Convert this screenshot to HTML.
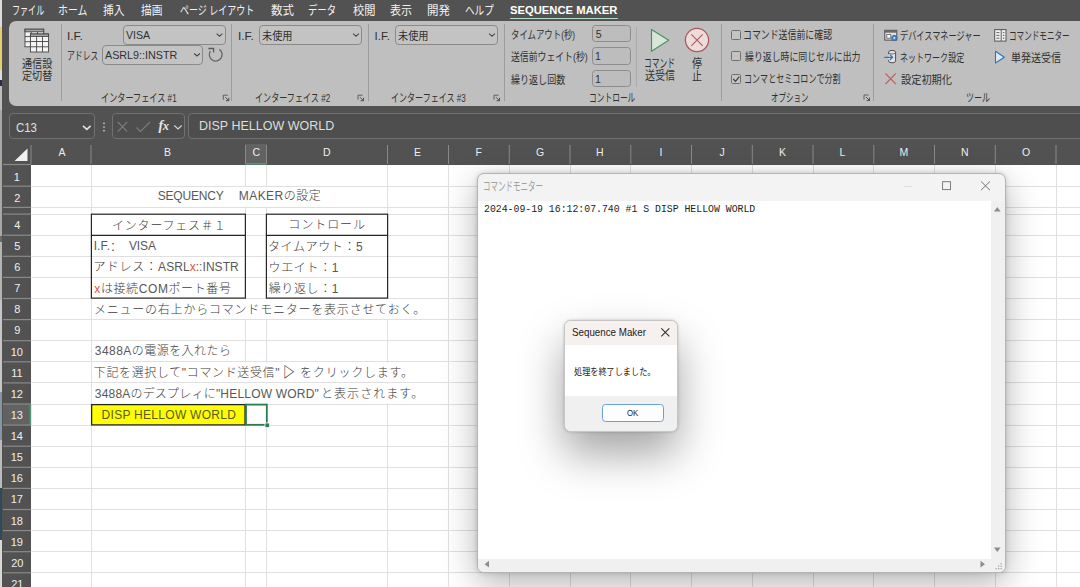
<!DOCTYPE html>
<html lang="ja"><head><meta charset="utf-8"><title>SEQUENCE MAKER</title>
<style>
*{box-sizing:border-box}
html,body{margin:0;padding:0}
body{width:1080px;height:587px;overflow:hidden;position:relative;background:#525252;
 font-family:"Liberation Sans","Noto Sans CJK JP",sans-serif}
.t{position:absolute;white-space:pre;line-height:1;transform-origin:0 50%;display:block}
.abs{position:absolute}
.layer{position:absolute;left:0;top:0;width:1080px;height:587px;overflow:hidden}
svg{position:absolute;left:0;top:0;overflow:visible}
.combo{position:absolute;border:1px solid #8a8a8a;border-radius:4px;background:#c3c3c3}
.inp{position:absolute;border:1px solid #8c8c8c;border-radius:3.5px;background:#bdbdbd}
.vsep{position:absolute;width:1px;background:#9c9c9c}
.cb{position:absolute;width:10px;height:10px;border:1px solid #707070;border-radius:1.5px;background:#c4c4c4}
</style></head>
<body>
<!-- sheet -->
<div class="layer"><svg width="1080" height="587" viewBox="0 0 1080 587" shape-rendering="crispEdges"><rect x="31" y="164.5" width="1049" height="423" fill="#ffffff"/><line x1="91" y1="164.5" x2="91" y2="587" stroke="#e0e0e0" stroke-width="1"/><line x1="245.5" y1="164.5" x2="245.5" y2="587" stroke="#e0e0e0" stroke-width="1"/><line x1="266.5" y1="164.5" x2="266.5" y2="587" stroke="#e0e0e0" stroke-width="1"/><line x1="387.5" y1="164.5" x2="387.5" y2="587" stroke="#e0e0e0" stroke-width="1"/><line x1="448.5" y1="164.5" x2="448.5" y2="587" stroke="#e0e0e0" stroke-width="1"/><line x1="509.3" y1="164.5" x2="509.3" y2="587" stroke="#e0e0e0" stroke-width="1"/><line x1="570" y1="164.5" x2="570" y2="587" stroke="#e0e0e0" stroke-width="1"/><line x1="630.8" y1="164.5" x2="630.8" y2="587" stroke="#e0e0e0" stroke-width="1"/><line x1="691.5" y1="164.5" x2="691.5" y2="587" stroke="#e0e0e0" stroke-width="1"/><line x1="752.3" y1="164.5" x2="752.3" y2="587" stroke="#e0e0e0" stroke-width="1"/><line x1="813" y1="164.5" x2="813" y2="587" stroke="#e0e0e0" stroke-width="1"/><line x1="873.8" y1="164.5" x2="873.8" y2="587" stroke="#e0e0e0" stroke-width="1"/><line x1="934.5" y1="164.5" x2="934.5" y2="587" stroke="#e0e0e0" stroke-width="1"/><line x1="995.3" y1="164.5" x2="995.3" y2="587" stroke="#e0e0e0" stroke-width="1"/><line x1="1056" y1="164.5" x2="1056" y2="587" stroke="#e0e0e0" stroke-width="1"/><line x1="1117" y1="164.5" x2="1117" y2="587" stroke="#e0e0e0" stroke-width="1"/><line x1="31" y1="186.2" x2="1080" y2="186.2" stroke="#e0e0e0" stroke-width="1"/><line x1="31" y1="207.4" x2="1080" y2="207.4" stroke="#e0e0e0" stroke-width="1"/><line x1="31" y1="214.1" x2="1080" y2="214.1" stroke="#e0e0e0" stroke-width="1"/><line x1="31" y1="235.2" x2="1080" y2="235.2" stroke="#e0e0e0" stroke-width="1"/><line x1="31" y1="256.3" x2="1080" y2="256.3" stroke="#e0e0e0" stroke-width="1"/><line x1="31" y1="277.4" x2="1080" y2="277.4" stroke="#e0e0e0" stroke-width="1"/><line x1="31" y1="298.5" x2="1080" y2="298.5" stroke="#e0e0e0" stroke-width="1"/><line x1="31" y1="319.6" x2="1080" y2="319.6" stroke="#e0e0e0" stroke-width="1"/><line x1="31" y1="340.7" x2="1080" y2="340.7" stroke="#e0e0e0" stroke-width="1"/><line x1="31" y1="361.8" x2="1080" y2="361.8" stroke="#e0e0e0" stroke-width="1"/><line x1="31" y1="382.9" x2="1080" y2="382.9" stroke="#e0e0e0" stroke-width="1"/><line x1="31" y1="404.0" x2="1080" y2="404.0" stroke="#e0e0e0" stroke-width="1"/><line x1="31" y1="425.1" x2="1080" y2="425.1" stroke="#e0e0e0" stroke-width="1"/><line x1="31" y1="446.2" x2="1080" y2="446.2" stroke="#e0e0e0" stroke-width="1"/><line x1="31" y1="467.3" x2="1080" y2="467.3" stroke="#e0e0e0" stroke-width="1"/><line x1="31" y1="488.4" x2="1080" y2="488.4" stroke="#e0e0e0" stroke-width="1"/><line x1="31" y1="509.5" x2="1080" y2="509.5" stroke="#e0e0e0" stroke-width="1"/><line x1="31" y1="530.6" x2="1080" y2="530.6" stroke="#e0e0e0" stroke-width="1"/><line x1="31" y1="551.7" x2="1080" y2="551.7" stroke="#e0e0e0" stroke-width="1"/><line x1="31" y1="572.8" x2="1080" y2="572.8" stroke="#e0e0e0" stroke-width="1"/><line x1="31" y1="593.9" x2="1080" y2="593.9" stroke="#e0e0e0" stroke-width="1"/></svg><svg width="1080" height="587" viewBox="0 0 1080 587"><rect x="244.5" y="187.0" width="2" height="19.6" fill="#fff"/><rect x="265.5" y="187.0" width="2" height="19.6" fill="#fff"/><rect x="244.5" y="299.3" width="2" height="19.5" fill="#fff"/><rect x="265.5" y="299.3" width="2" height="19.5" fill="#fff"/><rect x="386.5" y="299.3" width="2" height="19.5" fill="#fff"/><rect x="244.5" y="362.6" width="2" height="19.5" fill="#fff"/><rect x="265.5" y="362.6" width="2" height="19.5" fill="#fff"/><rect x="386.5" y="362.6" width="2" height="19.5" fill="#fff"/><rect x="244.5" y="383.7" width="2" height="19.5" fill="#fff"/><rect x="265.5" y="383.7" width="2" height="19.5" fill="#fff"/><rect x="386.5" y="383.7" width="2" height="19.5" fill="#fff"/><rect x="91.4" y="214.2" width="154" height="83.9" fill="none" stroke="#262626" stroke-width="1.2"/><line x1="91.5" y1="235.4" x2="245.4" y2="235.4" stroke="#262626" stroke-width="1.2"/><rect x="266.4" y="214.2" width="121.2" height="83.9" fill="none" stroke="#262626" stroke-width="1.2"/><line x1="266.4" y1="235.4" x2="387.6" y2="235.4" stroke="#262626" stroke-width="1.2"/><rect x="91.6" y="404.6" width="153.4" height="20.3" fill="#ffff00" stroke="#262626" stroke-width="1.3"/><rect x="246" y="404.6" width="20.8" height="20.2" fill="#ffffff" stroke="#2c7a4e" stroke-width="1.8"/><rect x="265" y="423" width="4.6" height="4.6" fill="#2c7a4e" stroke="#ffffff" stroke-width="0.8"/></svg><span class="t" style='left:157.70px;top:189.80px;font-size:12px;color:#3c3c3c;font-weight:300;letter-spacing:-0.2px;'><span style="color:#585858">SEQUENCY</span></span><span class="t" style='left:238.70px;top:189.80px;font-size:12px;color:#3c3c3c;font-weight:300;letter-spacing:0.471px;'><span style="color:#585858">MAKER</span>の設定</span><span class="t" style='left:112.00px;top:219.70px;font-size:12px;color:#3c3c3c;font-weight:300;letter-spacing:0.8px;'>インターフェス＃１</span><span class="t" style='left:93.70px;top:240.40px;font-size:12px;color:#3c3c3c;font-weight:300;letter-spacing:0.1px;'><span style="color:#585858">I.F.</span></span><span class="t" style='left:107.00px;top:241.50px;font-size:12px;color:#3c3c3c;font-weight:300;letter-spacing:0.2px;'>：</span><span class="t" style='left:128.90px;top:240.40px;font-size:12px;color:#3c3c3c;font-weight:300;letter-spacing:-0.1px;'><span style="color:#585858">VISA</span></span><span class="t" style='left:93.50px;top:261.30px;font-size:12px;color:#3c3c3c;font-weight:300;letter-spacing:0.95px;'>アドレス：</span><span class="t" style='left:158.10px;top:261.30px;font-size:12px;color:#3c3c3c;font-weight:300;letter-spacing:0.055px;'><span style="color:#585858">ASRL</span><span style="color:#e4503e">x</span><span style="color:#585858">::INSTR</span></span><span class="t" style='left:94.30px;top:283.00px;font-size:12px;color:#3c3c3c;font-weight:300;letter-spacing:0.6px;'><span style="color:#e4503e">x</span>は接続<span style="color:#585858">COM</span>ポート番号</span><span class="t" style='left:288.60px;top:218.90px;font-size:12px;color:#3c3c3c;font-weight:300;letter-spacing:0.88px;'>コントロール</span><span class="t" style='left:268.00px;top:240.70px;font-size:12px;color:#3c3c3c;font-weight:300;letter-spacing:0.614px;'>タイムアウト：<span style="color:#585858">5</span></span><span class="t" style='left:268.50px;top:261.50px;font-size:12px;color:#3c3c3c;font-weight:300;letter-spacing:0.66px;'>ウエイト：<span style="color:#585858">1</span></span><span class="t" style='left:268.70px;top:282.70px;font-size:12px;color:#3c3c3c;font-weight:300;letter-spacing:0.62px;'>繰り返し：<span style="color:#585858">1</span></span><span class="t" style='left:93.90px;top:303.80px;font-size:12px;color:#3c3c3c;font-weight:300;letter-spacing:0.788px;'>メニューの右上からコマンドモニターを表示させておく。</span><span class="t" style='left:94.75px;top:345.30px;font-size:12px;color:#3c3c3c;font-weight:300;letter-spacing:0.463px;'><span style="color:#585858">3488A</span>の電源を入れたら</span><span class="t" style='left:93.75px;top:367.30px;font-size:12px;color:#3c3c3c;font-weight:300;letter-spacing:0.637px;'>下記を選択して<span style="color:#585858">"</span>コマンド送受信<span style="color:#585858">"</span></span><span class="t" style='left:283.37px;top:364.90px;font-size:14.5px;color:#303030;font-weight:700;transform:scaleX(0.8167);'>▷</span><span class="t" style='left:300.10px;top:367.30px;font-size:12px;color:#3c3c3c;font-weight:300;letter-spacing:0.775px;'>をクリックします。</span><span class="t" style='left:94.75px;top:388.40px;font-size:12px;color:#3c3c3c;font-weight:300;letter-spacing:0.202px;'><span style="color:#585858">3488A</span>のデスプレィに<span style="color:#585858">"HELLOW WORD"</span></span><span class="t" style='left:321.00px;top:388.40px;font-size:12px;color:#3c3c3c;font-weight:300;letter-spacing:1.057px;'>と表示されます。</span><span class="t" style='left:101.60px;top:408.90px;font-size:12px;color:#55552a;font-weight:300;letter-spacing:0.281px;'><span style="color:#5a5a2c">DISP HELLOW WORLD</span></span><svg width="1080" height="587" viewBox="0 0 1080 587"><rect x="3" y="142" width="1077" height="22.5" fill="#525252"/><rect x="245.5" y="144" width="21" height="20.5" fill="#626262"/><rect x="245.5" y="163" width="21" height="1.6" fill="#4f9a6f"/><line x1="31" y1="145" x2="31" y2="164" stroke="#8a8a8a" stroke-width="1"/><line x1="91" y1="145" x2="91" y2="164" stroke="#8a8a8a" stroke-width="1"/><line x1="245.5" y1="145" x2="245.5" y2="164" stroke="#8a8a8a" stroke-width="1"/><line x1="266.5" y1="145" x2="266.5" y2="164" stroke="#8a8a8a" stroke-width="1"/><line x1="387.5" y1="145" x2="387.5" y2="164" stroke="#8a8a8a" stroke-width="1"/><line x1="448.5" y1="145" x2="448.5" y2="164" stroke="#8a8a8a" stroke-width="1"/><line x1="509.3" y1="145" x2="509.3" y2="164" stroke="#8a8a8a" stroke-width="1"/><line x1="570" y1="145" x2="570" y2="164" stroke="#8a8a8a" stroke-width="1"/><line x1="630.8" y1="145" x2="630.8" y2="164" stroke="#8a8a8a" stroke-width="1"/><line x1="691.5" y1="145" x2="691.5" y2="164" stroke="#8a8a8a" stroke-width="1"/><line x1="752.3" y1="145" x2="752.3" y2="164" stroke="#8a8a8a" stroke-width="1"/><line x1="813" y1="145" x2="813" y2="164" stroke="#8a8a8a" stroke-width="1"/><line x1="873.8" y1="145" x2="873.8" y2="164" stroke="#8a8a8a" stroke-width="1"/><line x1="934.5" y1="145" x2="934.5" y2="164" stroke="#8a8a8a" stroke-width="1"/><line x1="995.3" y1="145" x2="995.3" y2="164" stroke="#8a8a8a" stroke-width="1"/><line x1="1056" y1="145" x2="1056" y2="164" stroke="#8a8a8a" stroke-width="1"/><rect x="3" y="164.5" width="28" height="423" fill="#525252"/><rect x="3" y="404.0" width="28" height="21.100000000000023" fill="#626262"/><rect x="29.6" y="404.0" width="1.6" height="21.100000000000023" fill="#4f9a6f"/><line x1="3" y1="164.5" x2="31" y2="164.5" stroke="#8a8a8a" stroke-width="1.2"/><line x1="3" y1="186.2" x2="31" y2="186.2" stroke="#8a8a8a" stroke-width="1.2"/><line x1="3" y1="207.4" x2="31" y2="207.4" stroke="#8a8a8a" stroke-width="1.2"/><line x1="3" y1="214.1" x2="31" y2="214.1" stroke="#8a8a8a" stroke-width="1.2"/><line x1="3" y1="235.2" x2="31" y2="235.2" stroke="#8a8a8a" stroke-width="1.2"/><line x1="3" y1="256.3" x2="31" y2="256.3" stroke="#8a8a8a" stroke-width="1.2"/><line x1="3" y1="277.4" x2="31" y2="277.4" stroke="#8a8a8a" stroke-width="1.2"/><line x1="3" y1="298.5" x2="31" y2="298.5" stroke="#8a8a8a" stroke-width="1.2"/><line x1="3" y1="319.6" x2="31" y2="319.6" stroke="#8a8a8a" stroke-width="1.2"/><line x1="3" y1="340.7" x2="31" y2="340.7" stroke="#8a8a8a" stroke-width="1.2"/><line x1="3" y1="361.8" x2="31" y2="361.8" stroke="#8a8a8a" stroke-width="1.2"/><line x1="3" y1="382.9" x2="31" y2="382.9" stroke="#8a8a8a" stroke-width="1.2"/><line x1="3" y1="404.0" x2="31" y2="404.0" stroke="#8a8a8a" stroke-width="1.2"/><line x1="3" y1="425.1" x2="31" y2="425.1" stroke="#8a8a8a" stroke-width="1.2"/><line x1="3" y1="446.2" x2="31" y2="446.2" stroke="#8a8a8a" stroke-width="1.2"/><line x1="3" y1="467.3" x2="31" y2="467.3" stroke="#8a8a8a" stroke-width="1.2"/><line x1="3" y1="488.4" x2="31" y2="488.4" stroke="#8a8a8a" stroke-width="1.2"/><line x1="3" y1="509.5" x2="31" y2="509.5" stroke="#8a8a8a" stroke-width="1.2"/><line x1="3" y1="530.6" x2="31" y2="530.6" stroke="#8a8a8a" stroke-width="1.2"/><line x1="3" y1="551.7" x2="31" y2="551.7" stroke="#8a8a8a" stroke-width="1.2"/><line x1="3" y1="572.8" x2="31" y2="572.8" stroke="#8a8a8a" stroke-width="1.2"/><line x1="3" y1="593.9" x2="31" y2="593.9" stroke="#8a8a8a" stroke-width="1.2"/><path d="M27.5 148.5 L27.5 161 L14.5 161 Z" fill="#f0f0f0"/></svg><span class="t" style='left:58.50px;top:146.90px;font-size:10.5px;color:#eeeeee;'>A</span><span class="t" style='left:164.00px;top:146.90px;font-size:10.5px;color:#eeeeee;'>B</span><span class="t" style='left:252.50px;top:146.90px;font-size:10.5px;color:#eeeeee;'>C</span><span class="t" style='left:323.00px;top:146.90px;font-size:10.5px;color:#eeeeee;'>D</span><span class="t" style='left:414.00px;top:146.90px;font-size:10.5px;color:#eeeeee;'>E</span><span class="t" style='left:475.50px;top:146.90px;font-size:10.5px;color:#eeeeee;'>F</span><span class="t" style='left:536.00px;top:146.90px;font-size:10.5px;color:#eeeeee;'>G</span><span class="t" style='left:596.00px;top:146.90px;font-size:10.5px;color:#eeeeee;'>H</span><span class="t" style='left:659.50px;top:146.90px;font-size:10.5px;color:#eeeeee;'>I</span><span class="t" style='left:719.50px;top:146.90px;font-size:10.5px;color:#eeeeee;'>J</span><span class="t" style='left:779.00px;top:146.90px;font-size:10.5px;color:#eeeeee;'>K</span><span class="t" style='left:839.50px;top:146.90px;font-size:10.5px;color:#eeeeee;'>L</span><span class="t" style='left:899.50px;top:146.90px;font-size:10.5px;color:#eeeeee;'>M</span><span class="t" style='left:961.00px;top:146.90px;font-size:10.5px;color:#eeeeee;'>N</span><span class="t" style='left:1022.00px;top:146.90px;font-size:10.5px;color:#eeeeee;'>O</span><span class="t" style='left:13.70px;top:171.60px;font-size:11px;color:#eeeeee;'>1</span><span class="t" style='left:14.20px;top:192.60px;font-size:11px;color:#eeeeee;'>2</span><span class="t" style='left:14.20px;top:220.10px;font-size:11px;color:#eeeeee;'>4</span><span class="t" style='left:14.20px;top:241.10px;font-size:11px;color:#eeeeee;'>5</span><span class="t" style='left:14.20px;top:262.10px;font-size:11px;color:#eeeeee;'>6</span><span class="t" style='left:14.20px;top:283.10px;font-size:11px;color:#eeeeee;'>7</span><span class="t" style='left:14.20px;top:304.10px;font-size:11px;color:#eeeeee;'>8</span><span class="t" style='left:14.20px;top:325.10px;font-size:11px;color:#eeeeee;'>9</span><span class="t" style='left:10.70px;top:346.60px;font-size:11px;color:#eeeeee;'>10</span><span class="t" style='left:11.20px;top:367.60px;font-size:11px;color:#eeeeee;'>11</span><span class="t" style='left:10.70px;top:388.60px;font-size:11px;color:#eeeeee;'>12</span><span class="t" style='left:10.70px;top:409.60px;font-size:11px;color:#eeeeee;'>13</span><span class="t" style='left:10.70px;top:431.10px;font-size:11px;color:#eeeeee;'>14</span><span class="t" style='left:10.70px;top:452.10px;font-size:11px;color:#eeeeee;'>15</span><span class="t" style='left:10.70px;top:473.10px;font-size:11px;color:#eeeeee;'>16</span><span class="t" style='left:10.70px;top:494.10px;font-size:11px;color:#eeeeee;'>17</span><span class="t" style='left:10.70px;top:515.60px;font-size:11px;color:#eeeeee;'>18</span><span class="t" style='left:10.70px;top:536.60px;font-size:11px;color:#eeeeee;'>19</span><span class="t" style='left:11.20px;top:557.60px;font-size:11px;color:#eeeeee;'>20</span><span class="t" style='left:11.20px;top:578.60px;font-size:11px;color:#eeeeee;'>21</span></div>
<!-- tabs + ribbon -->
<div class="layer" style="height:142px"><div class="abs" style="left:0;top:0;width:1080px;height:142px;background:#525252"></div><span class="t" style='left:11.83px;top:4.50px;font-size:12px;color:#f2f2f2;transform:scaleX(0.6702);'>ファイル</span><span class="t" style='left:58.18px;top:4.50px;font-size:12px;color:#f2f2f2;transform:scaleX(0.8235);'>ホーム</span><span class="t" style='left:103.00px;top:5.00px;font-size:12px;color:#f2f2f2;transform:scaleX(0.8958);'>挿入</span><span class="t" style='left:141.00px;top:5.00px;font-size:12px;color:#f2f2f2;transform:scaleX(0.8958);'>描画</span><span class="t" style='left:179.75px;top:5.00px;font-size:12px;color:#f2f2f2;transform:scaleX(0.7500);'>ページ レイアウト</span><span class="t" style='left:271.00px;top:5.00px;font-size:12px;color:#f2f2f2;transform:scaleX(0.9583);'>数式</span><span class="t" style='left:308.22px;top:5.00px;font-size:12px;color:#f2f2f2;transform:scaleX(0.7794);'>データ</span><span class="t" style='left:352.50px;top:5.00px;font-size:12px;color:#f2f2f2;transform:scaleX(0.9348);'>校閲</span><span class="t" style='left:390.00px;top:5.00px;font-size:12px;color:#f2f2f2;transform:scaleX(0.9167);'>表示</span><span class="t" style='left:427.04px;top:5.00px;font-size:12px;color:#f2f2f2;transform:scaleX(0.9565);'>開発</span><span class="t" style='left:465.20px;top:5.00px;font-size:12px;color:#f2f2f2;transform:scaleX(0.8000);'>ヘルプ</span><span class="t" style='left:510.00px;top:4.60px;font-size:11.3px;color:#ffffff;font-weight:700;transform:scaleX(0.9954);'>SEQUENCE MAKER</span><div class="abs" style="left:509.5px;top:17.6px;width:108px;height:1.8px;background:#b5dcc6;border-radius:1px"></div><div class="abs" style="left:9px;top:21px;width:1090px;height:85.2px;background:#bfbfbf;border-radius:7px"></div><div class="vsep" style="left:61px;top:24px;height:77px"></div><div class="vsep" style="left:231px;top:24px;height:77px"></div><div class="vsep" style="left:368px;top:24px;height:77px"></div><div class="vsep" style="left:504px;top:24px;height:77px"></div><div class="vsep" style="left:721px;top:24px;height:77px"></div><div class="vsep" style="left:873px;top:24px;height:77px"></div><div class="vsep" style="left:636px;top:27px;height:60px;background:#ababab"></div><div class="combo" style="left:122.5px;top:24.6px;width:103.30000000000001px;height:20.0px"></div><div class="combo" style="left:102px;top:45px;width:100.80000000000001px;height:19.5px"></div><div class="combo" style="left:259px;top:24.6px;width:102.60000000000002px;height:20.0px"></div><div class="combo" style="left:394.5px;top:24.6px;width:103.10000000000002px;height:20.0px"></div><div class="inp" style="left:592.2px;top:25.2px;width:38.8px;height:17.2px"></div><div class="inp" style="left:592.2px;top:47.4px;width:38.8px;height:17.2px"></div><div class="inp" style="left:592.2px;top:69.8px;width:38.8px;height:17.0px"></div><div class="cb" style="left:731px;top:29.9px"></div><div class="cb" style="left:731px;top:51.3px"></div><div class="cb" style="left:731px;top:73.9px"></div><svg width="1080" height="587" viewBox="0 0 1080 587" fill="none"><path d="M216.6 33.7 L219.5 36.2 L222.4 33.7" stroke="#484848" stroke-width="1.1"/><path d="M194.1 53.5 L197 56.0 L199.9 53.5" stroke="#484848" stroke-width="1.1"/><path d="M353.1 33.7 L356 36.2 L358.9 33.7" stroke="#484848" stroke-width="1.1"/><path d="M489.1 33.7 L492 36.2 L494.9 33.7" stroke="#484848" stroke-width="1.1"/><path d="M223.3 99.7 V95.2 H227.8" stroke="#555" stroke-width="0.9"/><path d="M225.3 97.2 L228.60000000000002 100.5 M228.8 97.8 V100.7 H225.9" stroke="#444" stroke-width="0.9"/><path d="M358 99.7 V95.2 H362.5" stroke="#555" stroke-width="0.9"/><path d="M360 97.2 L363.3 100.5 M363.5 97.8 V100.7 H360.6" stroke="#444" stroke-width="0.9"/><path d="M494 99.7 V95.2 H498.5" stroke="#555" stroke-width="0.9"/><path d="M496 97.2 L499.3 100.5 M499.5 97.8 V100.7 H496.6" stroke="#444" stroke-width="0.9"/><path d="M864 99.5 V95 H868.5" stroke="#555" stroke-width="0.9"/><path d="M866 97 L869.3 100.3 M869.5 97.6 V100.5 H866.6" stroke="#444" stroke-width="0.9"/><g stroke="#454545" stroke-width="0.9"><rect x="25" y="29.2" width="18.7" height="17.6" fill="#f2f2f2"/><rect x="25" y="29.2" width="18.7" height="2.6" fill="#a5a5a5"/><line x1="31.2" y1="31.8" x2="31.2" y2="46.8"/><line x1="37.5" y1="31.8" x2="37.5" y2="46.8"/><line x1="25" y1="36.6" x2="43.7" y2="36.6"/><line x1="25" y1="41.7" x2="43.7" y2="41.7"/><rect x="30.4" y="34" width="18.2" height="18" fill="#f4f4f4"/><rect x="30.4" y="34" width="18.2" height="2.4" fill="#a5a5a5"/><line x1="36.6" y1="36.4" x2="36.6" y2="52"/><line x1="42.5" y1="36.4" x2="42.5" y2="52"/><line x1="30.4" y1="41.5" x2="48.6" y2="41.5"/><line x1="30.4" y1="46.8" x2="48.6" y2="46.8"/></g><path d="M219.4 49.4 A6.4 6.4 0 1 1 210.3 51.2" stroke="#666" stroke-width="1.3"/><path d="M208.4 48.5 H213.6 V52.4" stroke="#5a5a5a" stroke-width="1.3"/><path d="M651.5 29.4 L668.7 40.3 L651.5 51.3 Z" fill="#d8e5d9" stroke="#4f9160" stroke-width="1.2" stroke-linejoin="round"/><circle cx="697" cy="40.1" r="11.6" fill="#ecdcdc" stroke="#a85858" stroke-width="1.25"/><path d="M691.3 34.4 L702.7 45.8 M702.7 34.4 L691.3 45.8" stroke="#b85c5c" stroke-width="1.2"/><path d="M733.3 79 L735.5 81.3 L739.3 76.6" stroke="#3a3a3a" stroke-width="1.1"/><rect x="884.8" y="30.3" width="12" height="9.8" fill="#e4e4e4" stroke="#4a4a4a" stroke-width="1"/><rect x="884.8" y="30.3" width="12" height="2.4" fill="#6a6a6a"/><rect x="886.8" y="34.6" width="4" height="3.6" fill="#fff" stroke="#555" stroke-width="0.8"/><circle cx="894.3" cy="38" r="2.7" fill="#4a86c5" stroke="#2d68a8" stroke-width="0.8"/><circle cx="894.3" cy="38" r="0.9" fill="#dfeaf5"/><path d="M888.6 54.2 V52.2 Q888.6 50.4 892.1 50.4 Q895.6 50.4 895.6 52.2 V61 Q895.6 62.8 892.1 62.8 Q888.6 62.8 888.6 61 V60" stroke="#505050" stroke-width="1" fill="#e2e2e2"/><path d="M888.6 52.4 Q888.6 54 892.1 54 Q895.6 54 895.6 52.4" stroke="#505050" stroke-width="0.8"/><path d="M884.3 57.3 H892.3 M889.8 54.6 L892.6 57.3 L889.8 60" stroke="#2f74b5" stroke-width="1.2"/><path d="M885.5 73.5 L895.8 84 M895.8 73.5 L885.5 84" stroke="#c2645f" stroke-width="1.15"/><rect x="994.7" y="29.6" width="11.3" height="11.5" fill="#efefef" stroke="#555" stroke-width="1"/><path d="M1001.2 29.6 V41.1 M996.4 32.6 H999.4 M996.4 35.4 H999.4 M996.4 38.2 H999.4 M1002.8 32.6 H1004.4 M1002.8 35.4 H1004.4 M1002.8 38.2 H1004.4" stroke="#555" stroke-width="0.9"/><path d="M995.5 51.3 L1004.3 57.2 L995.5 63 Z" fill="#dfe9f4" stroke="#3474b0" stroke-width="1.1" stroke-linejoin="round"/></svg><span class="t" style='left:22.30px;top:58.80px;font-size:11.5px;color:#303030;transform:scaleX(0.8794);'>通信設</span><span class="t" style='left:22.30px;top:70.70px;font-size:11.5px;color:#303030;transform:scaleX(0.8794);'>定切替</span><span class="t" style='left:66.96px;top:30.50px;font-size:11.5px;color:#303030;transform:scaleX(1.0357);'>I.F.</span><span class="t" style='left:126.00px;top:30.00px;font-size:11.5px;color:#303030;transform:scaleX(0.9231);'>VISA</span><span class="t" style='left:67.32px;top:50.50px;font-size:11.5px;color:#303030;transform:scaleX(0.6818);'>アドレス</span><span class="t" style='left:105.00px;top:49.50px;font-size:11.5px;color:#303030;transform:scaleX(0.9351);'>ASRL9::INSTR</span><span class="t" style='left:101.29px;top:93.00px;font-size:11.5px;color:#303030;transform:scaleX(0.7075);'>インターフェイス #1</span><span class="t" style='left:238.46px;top:30.50px;font-size:11.5px;color:#303030;transform:scaleX(1.0357);'>I.F.</span><span class="t" style='left:262.00px;top:30.50px;font-size:11.5px;color:#303030;transform:scaleX(0.8824);'>未使用</span><span class="t" style='left:255.30px;top:93.00px;font-size:11.5px;color:#303030;transform:scaleX(0.7028);'>インターフェイス #2</span><span class="t" style='left:374.50px;top:30.50px;font-size:11.5px;color:#303030;'>I.F.</span><span class="t" style='left:397.50px;top:30.50px;font-size:11.5px;color:#303030;transform:scaleX(0.8824);'>未使用</span><span class="t" style='left:391.30px;top:93.00px;font-size:11.5px;color:#303030;transform:scaleX(0.6981);'>インターフェイス #3</span><span class="t" style='left:510.57px;top:30.30px;font-size:11.5px;color:#303030;transform:scaleX(0.7291);'>タイムアウト(秒)</span><span class="t" style='left:511.30px;top:52.30px;font-size:11.5px;color:#303030;transform:scaleX(0.7697);'>送信前ウェイト(秒)</span><span class="t" style='left:511.30px;top:74.50px;font-size:11.5px;color:#303030;transform:scaleX(0.7855);'>繰り返し回数</span><span class="t" style='left:595.70px;top:29.00px;font-size:10.5px;color:#303030;'>5</span><span class="t" style='left:595.00px;top:51.30px;font-size:10.5px;color:#303030;'>1</span><span class="t" style='left:595.00px;top:73.70px;font-size:10.5px;color:#303030;'>1</span><span class="t" style='left:588.66px;top:92.90px;font-size:11.5px;color:#303030;transform:scaleX(0.6716);'>コントロール</span><span class="t" style='left:643.71px;top:57.60px;font-size:12px;color:#303030;transform:scaleX(0.6444);'>コマンド</span><span class="t" style='left:645.00px;top:70.00px;font-size:12px;color:#303030;transform:scaleX(0.8333);'>送受信</span><span class="t" style='left:692.00px;top:57.80px;font-size:12px;color:#303030;transform:scaleX(0.8333);'>停</span><span class="t" style='left:692.00px;top:70.70px;font-size:12px;color:#303030;transform:scaleX(0.8333);'>止</span><span class="t" style='left:743.45px;top:30.20px;font-size:11.5px;color:#303030;transform:scaleX(0.7743);'>コマンド送信前に確認</span><span class="t" style='left:745.00px;top:52.10px;font-size:11.5px;color:#303030;transform:scaleX(0.7718);'>繰り返し時に同じセルに出力</span><span class="t" style='left:743.60px;top:74.20px;font-size:11.5px;color:#303030;transform:scaleX(0.7000);'>コンマとセミコロンで分割</span><span class="t" style='left:771.35px;top:93.40px;font-size:11.5px;color:#303030;transform:scaleX(0.6518);'>オプション</span><span class="t" style='left:899.79px;top:30.50px;font-size:11.5px;color:#303030;transform:scaleX(0.7098);'>デバイスマネージャー</span><span class="t" style='left:899.80px;top:53.00px;font-size:11.5px;color:#303030;transform:scaleX(0.6978);'>ネットワーク設定</span><span class="t" style='left:900.50px;top:74.50px;font-size:11.5px;color:#303030;transform:scaleX(0.8860);'>設定初期化</span><span class="t" style='left:1008.98px;top:30.70px;font-size:11.5px;color:#303030;transform:scaleX(0.6596);'>コマンドモニター</span><span class="t" style='left:1010.50px;top:52.50px;font-size:11.5px;color:#303030;transform:scaleX(0.8684);'>単発送受信</span><span class="t" style='left:966.30px;top:92.90px;font-size:11.5px;color:#303030;transform:scaleX(0.6970);'>ツール</span><div class="abs" style="left:9px;top:113px;width:86.2px;height:25.6px;border:1px solid #717171;border-radius:4px;background:#4e4e4e"></div><div class="abs" style="left:112px;top:113px;width:73px;height:25.6px;border:1px solid #717171;border-radius:4px;background:#4e4e4e"></div><div class="abs" style="left:188.3px;top:113px;width:910px;height:25.6px;border:1px solid #717171;border-radius:4px;background:#4e4e4e"></div><svg width="1080" height="587" viewBox="0 0 1080 587" fill="none"><path d="M83 125.9 L86.8 129.4 L90.6 125.9" stroke="#e0e0e0" stroke-width="1.6"/><circle cx="104" cy="123.3" r="0.85" fill="#d0d0d0"/><circle cx="104" cy="127" r="0.85" fill="#d0d0d0"/><circle cx="104" cy="130.7" r="0.85" fill="#d0d0d0"/><path d="M117.8 122 L127.2 131.6 M127.2 122 L117.8 131.6" stroke="#7c7c7c" stroke-width="1.1"/><path d="M136.5 127.5 L140.5 131.5 L150 122" stroke="#7c7c7c" stroke-width="1.1"/><path d="M174.3 125.5 L178 129 L181.7 125.5" stroke="#d8d8d8" stroke-width="1.1"/></svg><span class="t" style='left:158.5px;top:119px;font-size:14px;color:#e6e6e6;font-family:"Liberation Serif",serif;font-style:italic;font-weight:700'>f<span style="font-size:12.5px;margin-left:-0.5px">x</span></span><span class="t" style='left:16.00px;top:121.80px;font-size:12.5px;color:#e0e0e0;transform:scaleX(0.9130);'>C13</span><span class="t" style='left:199.00px;top:120.20px;font-size:12.5px;color:#dedede;'>DISP HELLOW WORLD</span></div>
<div class="abs" style="left:0;top:0;width:2px;height:587px;background:linear-gradient(to bottom,#dcdcdc 0px,#dcdcdc 27px,#e6cf6a 27px,#e6cf6a 70px,#dddddd 70px,#dddddd 80px,#2a2a55 80px,#2a2a55 86px,#bdbdbd 86px,#bdbdbd 110px,#a8a8a8 110px,#a8a8a8 236px,#6a6a6a 236px,#6a6a6a 242px,#b4b4b4 242px,#b4b4b4 300px,#c6c6c6 300px,#c6c6c6 392px,#8796a6 392px,#8796a6 440px,#bcbcbc 440px,#bcbcbc 488px,#2f4a5a 488px,#2f4a5a 540px,#d8d8d8 540px,#d8d8d8 587px)"></div>
<!-- command monitor -->
<div class="layer"><div class="abs" style="left:476.8px;top:172.8px;width:529.4px;height:399.8px;border-radius:7px;background:#f3f3f3;border:1px solid #b4b4b4;box-shadow:0 10px 34px rgba(0,0,0,.30),0 0 5px rgba(0,0,0,.16);overflow:hidden"><div class="abs" style="left:0;top:27px;width:513.6px;height:357.8px;background:#ffffff"></div><div class="abs" style="left:513.6px;top:27px;width:15px;height:374px;background:#f0f0f0"></div><div class="abs" style="left:0;top:384.8px;width:529px;height:14px;background:#f0f0f0"></div></div><svg width="1080" height="587" viewBox="0 0 1080 587" fill="none"><path d="M903.5 186.5 H912" stroke="#dcdcdc" stroke-width="1"/><rect x="942.6" y="181.7" width="7.9" height="7.9" stroke="#707070" stroke-width="0.9"/><path d="M981 181.4 L990 190.2 M990 181.4 L981 190.2" stroke="#767676" stroke-width="1"/><path d="M994 211.5 L997.3 207 L1000.6 211.5 Z" fill="#8c8c8c"/><path d="M994 547.5 L997.3 552 L1000.6 547.5 Z" fill="#8c8c8c"/><path d="M489 560.8 L484.6 564.2 L489 567.6 Z" fill="#8c8c8c"/><path d="M980.5 560.8 L985 564.2 L980.5 567.6 Z" fill="#8c8c8c"/><rect x="1000.5" y="563" width="1.3" height="1.3" fill="#a8a8a8"/><rect x="998" y="565.5" width="1.3" height="1.3" fill="#a8a8a8"/><rect x="1000.5" y="565.5" width="1.3" height="1.3" fill="#a8a8a8"/><rect x="995.5" y="568" width="1.3" height="1.3" fill="#a8a8a8"/><rect x="998" y="568" width="1.3" height="1.3" fill="#a8a8a8"/><rect x="1000.5" y="568" width="1.3" height="1.3" fill="#a8a8a8"/></svg><span class="t" style='left:483.00px;top:181.00px;font-size:12.5px;color:#a0a0a0;transform:scaleX(0.6010);'>コマンドモニター</span><span class="t" style='left:484.00px;top:204.10px;font-size:10.3px;color:#222;font-family:"Liberation Mono","Noto Sans Mono CJK JP",monospace;transform:scaleX(0.9542);'>2024-09-19 16:12:07.740 #1 S DISP HELLOW WORLD</span></div>
<!-- message box -->
<div class="layer"><div class="abs" style="left:564px;top:319.7px;width:114.3px;height:112.2px;border-radius:7px;background:#ffffff;border:1px solid #c6c6c6;box-shadow:0 22px 44px rgba(0,0,0,.36),0 0 3px rgba(0,0,0,.22);overflow:hidden"><div class="abs" style="left:0;top:0;width:113px;height:24.8px;background:#f6f0ee"></div><div class="abs" style="left:0;top:75px;width:113px;height:37px;background:#f0f0f0"></div><div class="abs" style="left:37px;top:83.6px;width:62px;height:17.8px;border:1px solid #6a9fd8;border-radius:3.5px;background:#fbfdff"></div></div><svg width="1080" height="587" viewBox="0 0 1080 587" fill="none"><path d="M661.3 328.3 L669.3 336.3 M669.3 328.3 L661.3 336.3" stroke="#333" stroke-width="1.1"/></svg><span class="t" style='left:572.00px;top:326.50px;font-size:11.5px;color:#222;transform:scaleX(0.8506);'>Sequence Maker</span><span class="t" style='left:574.00px;top:366.50px;font-size:9.5px;color:#222;transform:scaleX(0.8573);'>処理を終了しました。</span><span class="t" style='left:627.30px;top:407.80px;font-size:9.5px;color:#222;transform:scaleX(0.8214);'>OK</span></div>
</body></html>
